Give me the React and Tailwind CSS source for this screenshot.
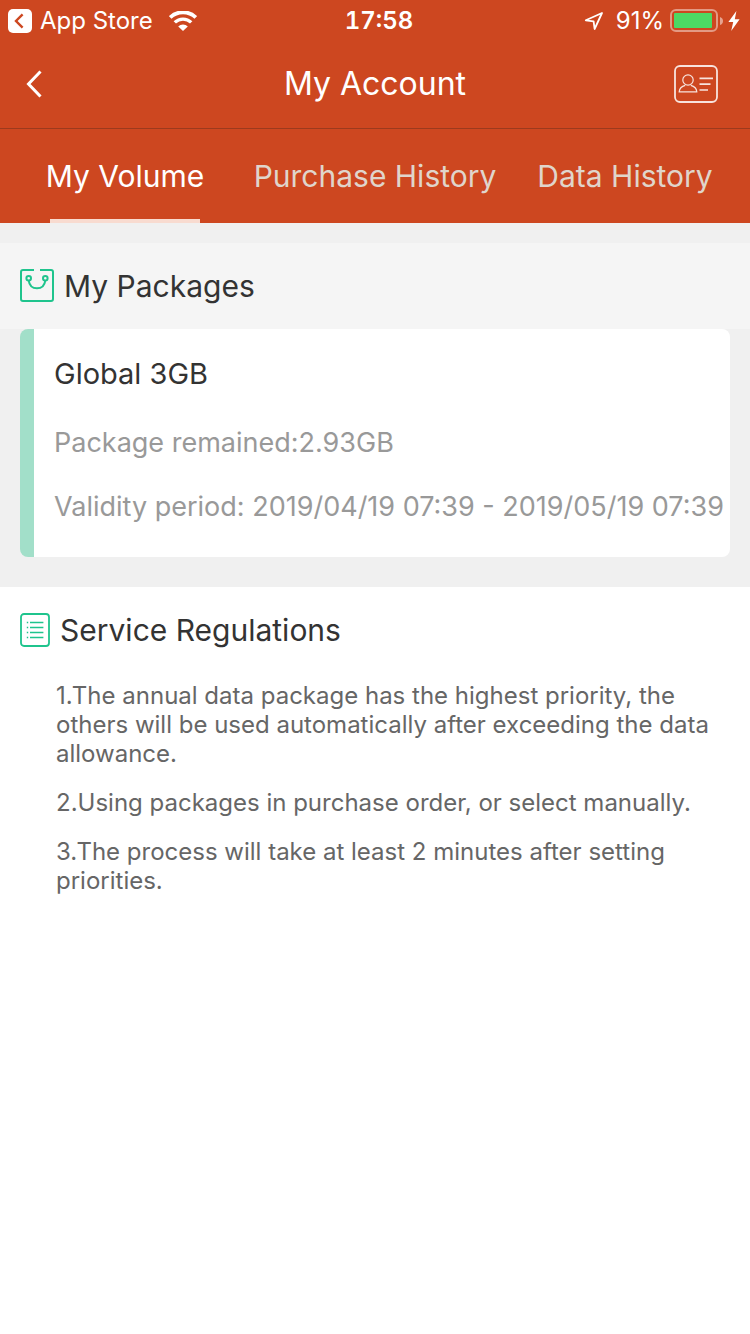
import React, { useState } from 'react';

const tabs = ['My Volume', 'Purchase History', 'Data History'];

const packages = [
  { name: 'Global 3GB', remained: '2.93GB', period: '2019/04/19 07:39 - 2019/05/19 07:39' },
];

const regulations = [
  '1.The annual data package has the highest priority, the others will be used automatically after exceeding the data allowance.',
  '2.Using packages in purchase order, or select manually.',
  '3.The process will take at least 2 minutes after setting priorities.',
];

const WifiIcon = () => (
  <svg width="28" height="20" viewBox="0 0 28 20" fill="none" stroke="#fff">
    <path d="M1.2 6.4A18.5 18.5 0 0 1 26.8 6.4" strokeWidth="3.8" />
    <path d="M5.8 11.4A11.8 11.8 0 0 1 22.2 11.4" strokeWidth="3.4" />
    <path d="M14 20L9.2 15.6A6.6 6.6 0 0 1 18.8 15.6Z" fill="#fff" stroke="none" />
  </svg>
);

const LocationIcon = () => (
  <svg width="20" height="20" viewBox="0 0 20 20" fill="none" stroke="#fff" strokeWidth="1.8" strokeLinejoin="round">
    <path d="M18 2L1.8 9.3L9.6 10.3L10.6 18Z" />
  </svg>
);

const BatteryIcon = () => (
  <svg width="54" height="24" viewBox="0 0 54 24" fill="none">
    <rect x="1" y="1" width="46" height="21" rx="5" stroke="#fff" strokeOpacity=".45" strokeWidth="2" />
    <rect x="4" y="4" width="38" height="15" rx="1" fill="#4cd964" />
    <path d="M50 8Q53 9 53 12Q53 15 50 16Z" fill="#fff" fillOpacity=".5" />
  </svg>
);

const BoltIcon = () => (
  <svg width="12" height="20" viewBox="0 0 12 20" fill="#fff">
    <path d="M8.4 0L0.4 11H5.2L3.2 20L11.6 8.2H6.8Z" />
  </svg>
);

const IdCardIcon = () => (
  <svg width="44" height="38" viewBox="0 0 44 38" fill="none" stroke="#fff" strokeOpacity=".85">
    <rect x="1" y="1" width="42" height="36" rx="5" strokeWidth="1.8" />
    <circle cx="14" cy="15" r="5.2" strokeWidth="1.2" />
    <path d="M11.2 20.4C7.6 21.4 5.4 23.6 5.2 26.9H22.8C22.6 23.6 20.4 21.4 16.8 20.4" strokeWidth="1.2" />
    <path d="M25.5 13.3H39M25.5 19.2H36.5M25.5 25H34" strokeWidth="1.7" />
  </svg>
);

const BagIcon = () => (
  <svg width="34" height="34" viewBox="0 0 34 34" fill="none" stroke="#1fc48d" strokeWidth="2">
    <path d="M14 1H3Q1 1 1 3V30Q1 32 3 32H31Q33 32 33 30V3Q33 1 31 1H20" />
    <circle cx="8.7" cy="9.3" r="2.3" />
    <circle cx="25.3" cy="9.3" r="2.3" />
    <path d="M8.7 11.6C9.4 16.5 12.6 19.3 17 19.3S24.6 16.5 25.3 11.6" />
  </svg>
);

const ListIcon = () => (
  <svg width="30" height="34" viewBox="0 0 30 34" fill="none" stroke="#1fc48d">
    <rect x="1" y="1" width="28" height="32" rx="3" strokeWidth="1.8" />
    <path d="M10 9.5H23.4M10 14.5H23.4M10 19.5H23.4M10 24.5H23.4" strokeWidth="1.5" />
    <path d="M6.8 9.5H8.2M6.8 14.5H8.2M6.8 19.5H8.2M6.8 24.5H8.2" strokeWidth="1.5" />
  </svg>
);

const StatusBar = () => (
  <div className="grid h-10 grid-cols-3 items-center px-2 pt-px text-2xl text-white">
    <div className="flex items-center gap-2">
      <a href="#app-store" className="flex items-center gap-2">
        <svg width="24" height="24" viewBox="0 0 24 24" fill="none">
          <rect width="24" height="24" rx="5" fill="#fff" />
          <path d="M14.6 5.4L8 12L14.6 18.6" stroke="#cd4720" strokeWidth="2.4" />
        </svg>
        App Store
      </a>
      <span className="ml-2"><WifiIcon /></span>
    </div>
    <span className="pl-2 text-center font-semibold tabular-nums">17:58</span>
    <div className="flex items-center justify-end pr-[2px]">
      <LocationIcon />
      <span className="ml-3 mr-1.5">91%</span>
      <BatteryIcon />
      <span className="ml-1"><BoltIcon /></span>
    </div>
  </div>
);

const App = () => {
  const [active, setActive] = useState(tabs[0]);

  return (
    <div className="min-h-screen bg-white font-['Inter',sans-serif] text-[#333]">
      <header className="bg-[#cd4720]">
        <StatusBar />
        <div className="grid h-[89px] grid-cols-[44px_1fr_44px] items-center border-b border-[#9c3a1d] px-8">
          <button type="button" aria-label="Back" className="-ml-5 flex h-11 w-11 items-center justify-center">
            <svg width="16" height="28" viewBox="0 0 16 28" fill="none" stroke="#fff" strokeWidth="3">
              <path d="M14.5 1.5L2.5 14L14.5 26.5" />
            </svg>
          </button>
          <h1 className="text-center text-[32px] text-white">My Account</h1>
          <button type="button" aria-label="Account details"><IdCardIcon /></button>
        </div>
        <nav className="grid grid-cols-3">
          {tabs.map(t => (
            <button key={t} type="button" onClick={() => setActive(t)}
              className={`flex h-[94px] flex-col items-center justify-between whitespace-nowrap text-[30px] leading-[94px] ${active === t ? 'text-white' : 'text-[#e0d5cb]'}`}>
              <span className="h-[90px]">{t}</span>
              <span className={`h-1 w-3/5 ${active === t ? 'bg-[#f8dbd0]' : ''}`} />
            </button>
          ))}
        </nav>
      </header>

      <section className="bg-[#f0f0f0] pt-5 pb-[30px]">
        <div className="flex h-[86px] items-center gap-[10px] bg-[#f5f5f5] px-5">
          <BagIcon />
          <h2 className="text-[30px]">My Packages</h2>
        </div>
        {packages.map(p => (
          <div key={p.name} className="mx-5 overflow-hidden rounded-lg border-l-14 border-[#a2dfc9] bg-white px-5 pt-6 pb-[30px] whitespace-nowrap">
            <h3 className="text-[29px] leading-[42px]">{p.name}</h3>
            <p className="mt-7 text-[27px] leading-10 text-[#999]">Package remained:{p.remained}</p>
            <p className="mt-6 text-[27px] leading-10 text-[#999]">Validity period: {p.period}</p>
          </div>
        ))}
      </section>

      <section>
        <div className="flex h-[86px] items-center gap-[10px] px-5">
          <ListIcon />
          <h2 className="text-[30px]">Service Regulations</h2>
        </div>
        <div className="space-y-5 pt-2 pl-14 pr-8 text-2xl leading-[29px] text-[#666]">
          {regulations.map(r => <p key={r}>{r}</p>)}
        </div>
      </section>
    </div>
  );
};

export default App;
